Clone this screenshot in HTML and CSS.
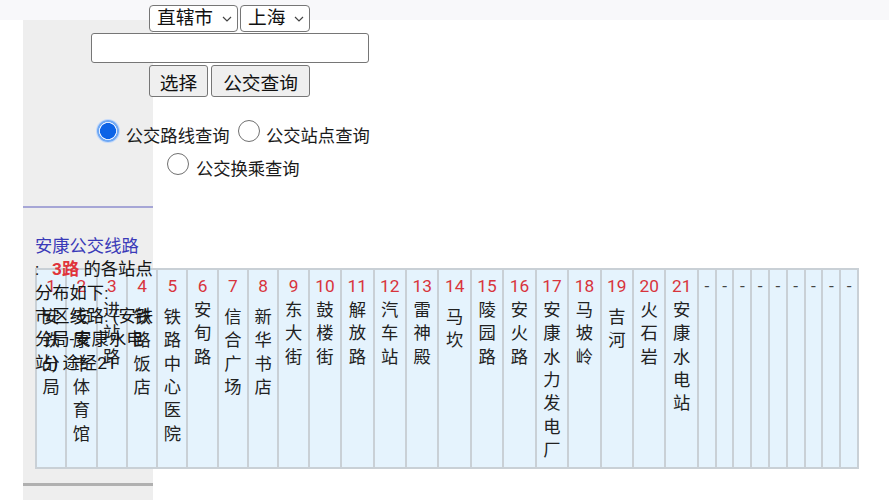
FILE: index.html
```html
<!DOCTYPE html>
<html lang="zh-CN">
<head>
<meta charset="utf-8">
<title>安康公交线路 3路</title>
<link rel="stylesheet" href="styles.css">
</head>
<body>
<div class="page">
  <form class="search">
    <div class="selects">
      <label class="sel sel-city"><select><option>直辖市</option></select><svg class="chev" width="10" height="6" viewBox="0 0 10 6"><polyline points="1,1 5,5 9,1" fill="none" stroke="#444" stroke-width="1.2"/></svg></label>
      <label class="sel sel-prov"><select><option>上海</option></select><svg class="chev" width="10" height="6" viewBox="0 0 10 6"><polyline points="1,1 5,5 9,1" fill="none" stroke="#444" stroke-width="1.2"/></svg></label>
    </div>
    <input class="keyword" type="text">
    <div class="buttons">
      <button type="button" class="btn btn-pick">选择</button>
      <button type="button" class="btn btn-query">公交查询</button>
    </div>
    <div class="modes">
      <div class="mode-row">
        <label class="mode"><input type="radio" name="mode" checked><span>公交路线查询</span></label>
        <label class="mode"><input type="radio" name="mode"><span>公交站点查询</span></label>
      </div>
      <div class="mode-row">
        <label class="mode"><input type="radio" name="mode"><span>公交换乘查询</span></label>
      </div>
    </div>
  </form>

  <hr class="rule rule-top">

  <div class="route">
    <table class="stops">
      <tr>
        <td><span class="num">1</span><span class="name even">安铁分局</span></td>
        <td><span class="num">2</span><span class="name even">安康市体育馆</span></td>
        <td><span class="num">3</span><span class="name">进站路</span></td>
        <td><span class="num">4</span><span class="name even">铁路饭店</span></td>
        <td><span class="num">5</span><span class="name even">铁路中心医院</span></td>
        <td><span class="num">6</span><span class="name">安旬路</span></td>
        <td><span class="num">7</span><span class="name even">信合广场</span></td>
        <td><span class="num">8</span><span class="name even">新华书店</span></td>
        <td><span class="num">9</span><span class="name">东大街</span></td>
        <td><span class="num">10</span><span class="name">鼓楼街</span></td>
        <td><span class="num">11</span><span class="name">解放路</span></td>
        <td><span class="num">12</span><span class="name">汽车站</span></td>
        <td><span class="num">13</span><span class="name">雷神殿</span></td>
        <td><span class="num">14</span><span class="name even">马坎</span></td>
        <td><span class="num">15</span><span class="name">陵园路</span></td>
        <td><span class="num">16</span><span class="name">安火路</span></td>
        <td><span class="num">17</span><span class="name">安康水力发电厂</span></td>
        <td><span class="num">18</span><span class="name">马坡岭</span></td>
        <td><span class="num">19</span><span class="name even">吉河</span></td>
        <td><span class="num">20</span><span class="name">火石岩</span></td>
        <td><span class="num">21</span><span class="name">安康水电站</span></td>
        <td><span class="num dash">-</span></td>
        <td><span class="num dash">-</span></td>
        <td><span class="num dash">-</span></td>
        <td><span class="num dash">-</span></td>
        <td><span class="num dash">-</span></td>
        <td><span class="num dash">-</span></td>
        <td><span class="num dash">-</span></td>
        <td><span class="num dash">-</span></td>
        <td><span class="num dash">-</span></td>
      </tr>
    </table>
    <div class="route-text">
      <a class="route-link" href="#">安康公交线路</a>
      :&nbsp;&nbsp; <b class="route-no">3路</b> 的各站点分布如下:<br>市区线路: (安铁分局-安康水电站) 途经21
    </div>
  </div>

  <hr class="rule rule-bottom">
</div>
</body>
</html>
```

FILE: styles.css
```css
* { box-sizing: border-box; }

html, body {
  margin: 0;
  padding: 0;
}

body {
  font-family: Roboto, "Noto Sans CJK SC", sans-serif;
  font-size: 17.3px;
  line-height: 23.4px;
  color: #1a1a1a;
}

.page {
  min-height: 500px;
  background:
    linear-gradient(#f8f8fa, #f8f8fa) 0 0 / 100% 20px no-repeat,
    linear-gradient(#eeeeee, #eeeeee) 23px 20px / 130px 100% no-repeat,
    #ffffff;
  overflow: hidden;
}

/* ---------- search form ---------- */
.search {
  width: 459px;
  margin: 0;
  padding-top: 5px;
  display: flex;
  flex-direction: column;
  align-items: center;
}

.selects {
  display: flex;
  gap: 2px;
  height: 27px;
}

.sel {
  display: inline-flex;
  align-items: center;
  justify-content: space-between;
  height: 27px;
  padding: 0 5px 0 7px;
  border: 1px solid #767676;
  border-radius: 4px;
  background: #fff;
}

.sel-city { width: 89px; }
.sel-prov { width: 70px; }

.sel select {
  appearance: none;
  -webkit-appearance: none;
  border: 0;
  margin: 0;
  padding: 0;
  background: transparent;
  font-family: inherit;
  font-size: 18.7px;
  line-height: 25px;
  color: #111;
  outline: none;
}

.chev { flex: none; }

.keyword {
  width: 278px;
  height: 30px;
  margin: 1px 0 0;
  border: 1px solid #767676;
  border-radius: 3px;
  background: #fff;
  font: inherit;
}

.buttons {
  display: flex;
  gap: 3px;
  margin-top: 2px;
}

.btn {
  height: 32px;
  margin: 0;
  padding: 0;
  border: 1px solid #767676;
  border-radius: 3px;
  background: #efefef;
  font-family: inherit;
  font-size: 18.7px;
  color: #111;
}

.btn-pick { width: 59px; }
.btn-query { width: 99px; }

.modes {
  align-self: stretch;
  padding-left: 8px;
  margin-top: 23px;
  display: flex;
  flex-direction: column;
  gap: 4.6px;
}

.mode-row {
  display: flex;
  justify-content: center;
  gap: 8px;
}

.mode {
  display: flex;
  align-items: flex-start;
  gap: 6.5px;
}

.mode span {
  margin-top: 5px;
  color: #1a1a1a;
}

.mode input {
  appearance: none;
  -webkit-appearance: none;
  flex: none;
  width: 22px;
  height: 22px;
  margin: 0;
  border-radius: 50%;
  border: 1.5px solid #707070;
  background: #fff;
}

.mode input:checked {
  border: 0;
  background: radial-gradient(circle closest-side, #0c63e6 0 70%, #dfeafd 74% 80%, #6ea8f5 84% 100%);
  box-shadow: 0 0 0 1px #c4dafb;
}

/* ---------- rules ---------- */
.rule {
  width: 130px;
  margin-left: 23px;
  border: 0;
}

.rule-top {
  height: 2px;
  margin-top: 25px;
  margin-bottom: 0;
  background: #a6a6d6;
}

.rule-bottom {
  height: 3px;
  margin-top: 14px;
  margin-bottom: 0;
  background: #b0b0b0;
}

/* ---------- route block ---------- */
.route {
  display: grid;
  margin-left: 35px;
  margin-top: 26.3px;
}

.route-text {
  grid-area: 1 / 1;
  position: relative;
  z-index: 1;
  width: 120px;
  align-self: start;
  color: #141414;
}

.route-link {
  display: block;
  color: #3a3ab8;
  text-decoration: none;
}

.route-no {
  color: #e0333a;
  font-weight: bold;
}

.stops {
  grid-area: 1 / 1;
  align-self: start;
  justify-self: start;
  width: 1px;
  margin-top: 33.7px;
  border-collapse: collapse;
}

.stops td {
  border: 2px solid #c9d0d6;
  background: #e5f3fd;
  padding: 5px 5.5px 4px;
  vertical-align: top;
  text-align: center;
  line-height: 23.4px;
}

.num {
  display: block;
  color: #d8343c;
}

.num.dash {
  color: #444;
}

.name {
  display: block;
  color: #222;
}

.name.even {
  padding-top: 7px;
}
```
